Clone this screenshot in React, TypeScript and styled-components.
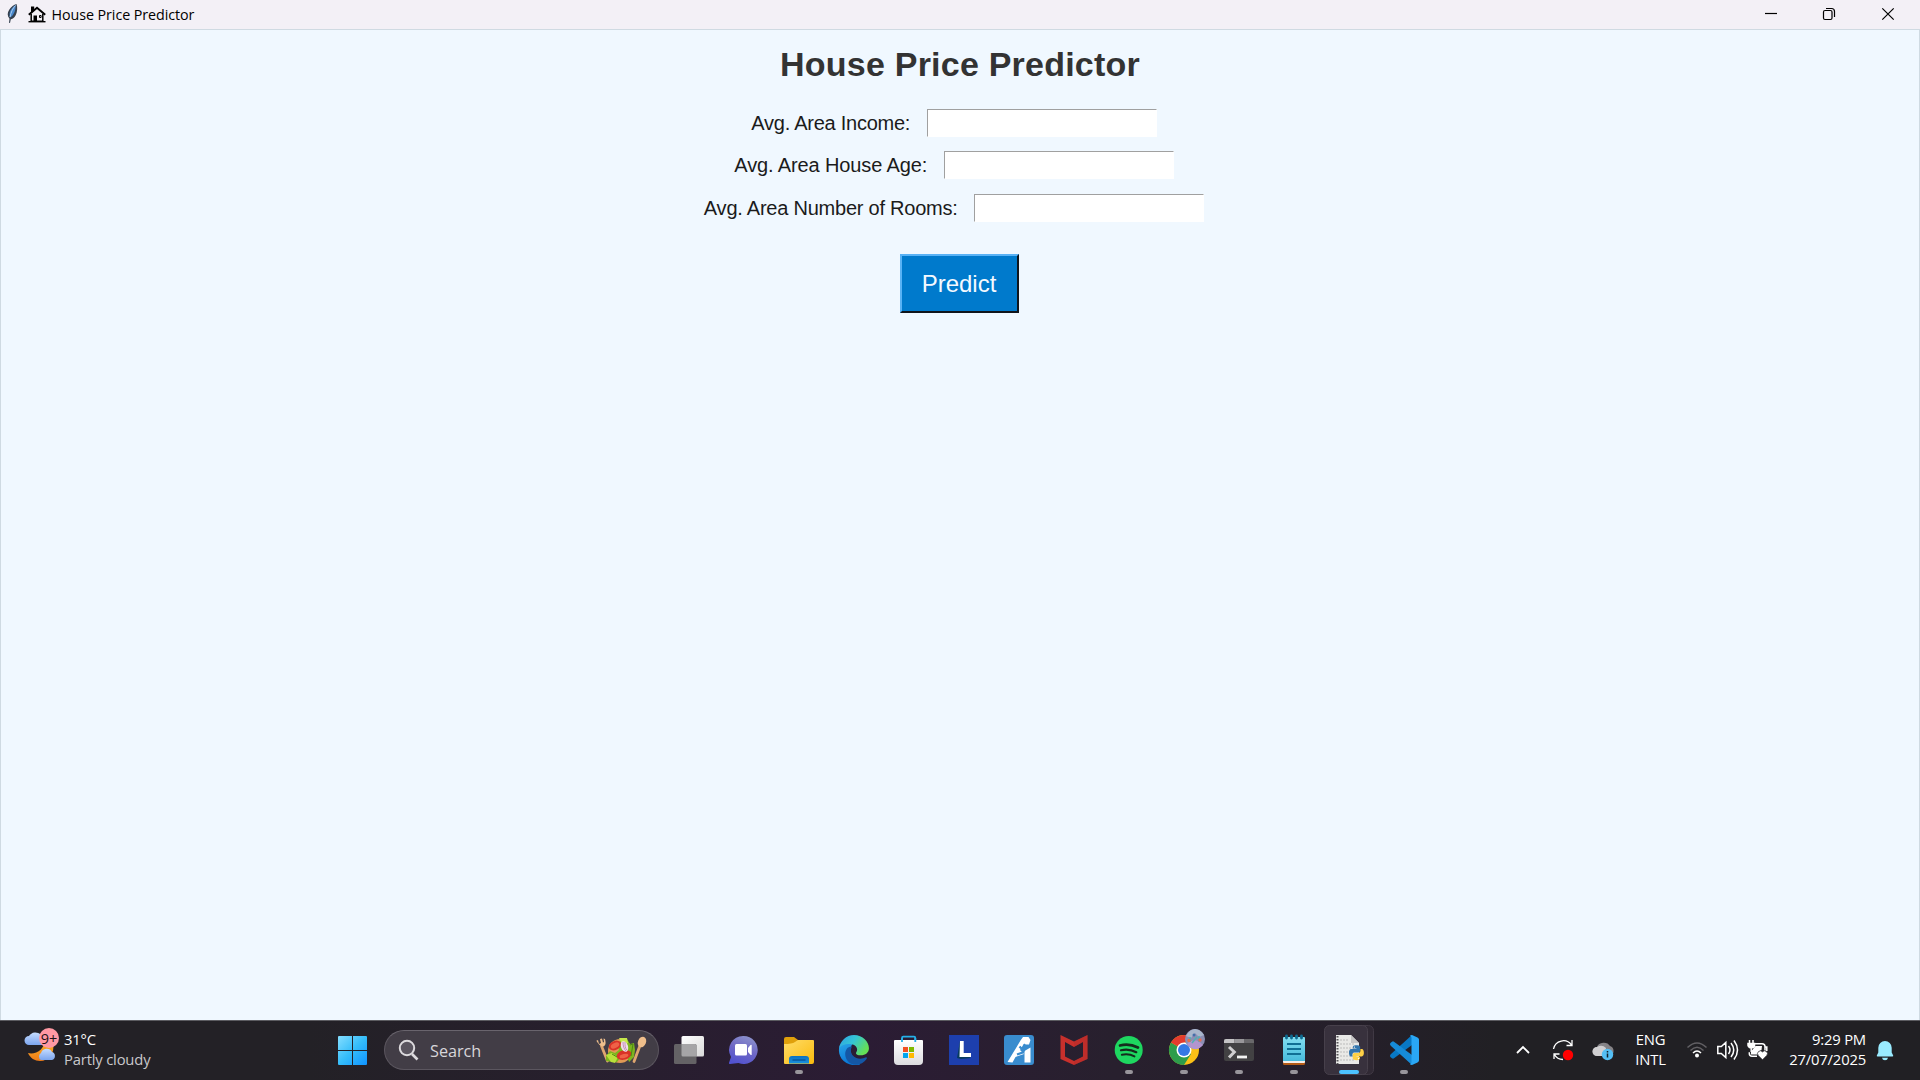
import React from "react";
import styled, { createGlobalStyle } from "styled-components";

const UI = `"Open Sans", "Noto Sans", sans-serif`;
const ARIAL = `"Liberation Sans", Arial, sans-serif`;

const Global = createGlobalStyle`
  * { box-sizing: border-box; }
  body { margin: 0; overflow: hidden; }
  svg { display: block; flex: none; overflow: visible; }
`;

const Screen = styled.div`
  width: 1920px;
  height: 1080px;
  display: flex;
  flex-direction: column;
  background: #f0f8ff;
`;

const TitleBar = styled.header`
  height: 29px;
  flex: none;
  display: flex;
  align-items: flex-start;
  background: #f3f0f6;
`;

const WindowTitle = styled.span`
  font: 400 14.3px/29px ${UI};
  letter-spacing: -0.07px;
  color: #000;
  margin-left: 5.500px;
  white-space: nowrap;
`;

const Controls = styled.div`
  display: flex;
  margin-left: auto;
`;

const Client = styled.main`
  flex: 1;
  border: 1px solid #cfdae2;
  border-bottom: 0;
  display: flex;
  flex-direction: column;
  align-items: center;
`;

const Heading = styled.h1`
  margin: 13px 0 0;
  font: 700 34px/42px ${ARIAL};
  letter-spacing: 0.22px;
  color: #333;
  white-space: nowrap;
`;

const Form = styled.form`
  display: flex;
  flex-direction: column;
  align-items: center;
  gap: 14.5px;
  margin-top: 23.6px;
`;

const Row = styled.div`
  display: flex;
  align-items: center;
  height: 28px;
  padding-right: 12px;
`;

const Label = styled.label<{ $spacing: number }>`
  font: 400 20px/28px ${ARIAL};
  letter-spacing: ${(p) => p.$spacing}px;
  color: #1b1b1b;
  margin-right: 16.5px;
  white-space: nowrap;
`;

const Entry = styled.input`
  width: 230px;
  height: 28px;
  padding: 0 4px;
  font: 400 18px ${ARIAL};
  background: #fff;
  outline: 0;
  border: 1px solid #fff;
  border-top: 1px solid #a0a0a0;
  border-left: 1px solid #a0a0a0;
`;

const PredictButton = styled.button`
  margin: 18px 2px 0 0;
  width: 119px;
  height: 59px;
  padding: 0;
  background: #007acc;
  color: #f4f9ff;
  font: 400 24px/50px ${ARIAL};
  border: 2px solid #10151b;
  border-top-color: #59b2f5;
  border-left-color: #59b2f5;
`;

const Taskbar = styled.footer`
  height: 60px;
  flex: none;
  display: flex;
  align-items: stretch;
  box-shadow: inset 0 1px #5c5c61;
  background: linear-gradient(90deg, #232126 0, #232126 16%, #271f2d 30%, #2b1c34 45%, #28202e 58%, #251f2a 70%, #212024 78%, #212024 100%);
`;

const Weather = styled.div`
  width: 325px;
  display: flex;
`;

const TextPair = styled.div<{ $align: string; $width: number }>`
  width: ${(p) => p.$width}px;
  display: flex;
  flex-direction: column;
  justify-content: center;
  padding-bottom: 2px;
  text-align: ${(p) => p.$align};
  font: 400 14.8px/20px ${UI};
  letter-spacing: -0.18px;
  color: #fff;
  white-space: nowrap;
`;

const Muted = styled.span`
  color: #c9c8cb;
`;

const SearchBox = styled.div`
  width: 275px;
  height: 40px;
  margin: 10px 2px 0 4px;
  border: 1px solid #5b565f;
  border-top-color: #69646d;
  border-radius: 20px;
  background: #423d46;
  display: flex;
  align-items: center;
`;

const SearchText = styled.span`
  font: 400 16.2px/38px ${UI};
  color: #d8d6da;
  margin-left: 11px;
  padding-top: 1px;
  flex: 1;
`;

const Tray = styled.div`
  display: flex;
  margin-left: auto;
`;

const Slot = ({ children }: { children: React.ReactNode }) => (
  <svg width="55" height="60" viewBox="0 0 55 60">{children}</svg>
);

const Dot = () => <rect x="24" y="50" width="8" height="4" rx="2" fill="#98959b" />;

const WeatherIcon = () => (
  <svg width="64" height="60" viewBox="0 0 64 60">
    <defs>
      <linearGradient id="cloud" x2="0" y2="1"><stop stopColor="#c5dcff" /><stop offset="1" stopColor="#7ba5ee" /></linearGradient>
      <linearGradient id="moon" x2="0" y2="1"><stop stopColor="#ffc02e" /><stop offset="1" stopColor="#ee7b18" /></linearGradient>
    </defs>
    <path d="M45 17c3 0 7 3 8 7 2 9-4 17-13 17-5 0-10-3-12-8 7 2 18-3 17-16Z" fill="url(#moon)" />
    <path d="M29 25a4 4 0 0 1 0-9 7 6 0 0 1 12-1 5 5 0 0 1 2 10Z" fill="url(#cloud)" />
    <path d="M41 40a4 4 0 0 1 0-7 6 6 0 0 1 11-1 4.200 4.200 0 0 1 0 8Z" fill="url(#cloud)" />
    <circle cx="49" cy="18" r="10" fill="#ff99a4" />
    <text x="49" y="23.500" textAnchor="middle" fontFamily={UI} fontSize="14.500" fill="#1c1216">9+</text>
  </svg>
);

const Feather = () => (
  <svg width="28" height="29" viewBox="0 0 28 29">
    <path d="M16.500 4c1.200 3 .8 8-.7 11-1.400 3-3.700 4-5 4.200L10 23l-1-.3.500-4c-2.500-3-2.200-6-.3-9C11 7 14 4.300 16.500 4Z" fill="#35404e" />
    <path d="M15.700 5c-3 1.800-5.500 4.600-6 8-.1 2 0 3.500.5 4.500 2.500-1.500 5.500-5.500 5.500-12.500Z" fill="#4787cc" />
    <path d="M15.500 5.500c-3 3-4.500 7-5.500 11.500" stroke="#a9cdf0" fill="none" />
  </svg>
);

const House = () => (
  <svg width="18" height="29" viewBox="28 0 18 29">
    <g fill="none" stroke="#000">
      <path d="m28.800 14.800 8.200-7 8.200 7" strokeWidth="2" />
      <path d="M31.200 14v7.300h11.600V14" strokeWidth="1.500" />
      <path d="M28.500 21.700h17" strokeWidth="1.400" />
      <path d="M39.500 15.500h1.600v2h-1.600Z" />
    </g>
    <path d="M31 6.500h3.200v4L31 13ZM33.500 15.500h3.500v6h-3.500Z" fill="#000" />
  </svg>
);

const ControlIcons = () => (
  <svg width="190" height="29" viewBox="1730 0 190 29" fill="none" stroke="#000" strokeWidth="1.200">
    <path d="M1765 13.500h12" />
    <rect x="1823.500" y="10.500" width="8.500" height="9" rx="1.500" />
    <path d="M1826 8.500h5.500q3 0 3 3V17" />
    <path d="m1882.300 8.300 11.400 11.400m0-11.400-11.400 11.400" />
  </svg>
);

const StartIcon = () => (
  <svg width="55" height="60" viewBox="325 0 55 60">
    <defs><linearGradient id="win" gradientUnits="userSpaceOnUse" x1="338" y1="16" x2="367" y2="45"><stop stopColor="#85deff" /><stop offset=".5" stopColor="#35bdfa" /><stop offset="1" stopColor="#0f93ff" /></linearGradient></defs>
    <path fill="url(#win)" d="M339 16h13v14h-14V17q0-1 1-1ZM353 16h13q1 0 1 1v13h-14ZM338 31h14v14h-13q-1 0-1-1ZM353 31h14v13q0 1-1 1h-13Z" />
  </svg>
);

const Magnifier = () => (
  <svg width="34" height="38" viewBox="0 0 34 38" fill="none" stroke="#dcdadd">
    <circle cx="22" cy="17" r="7.200" strokeWidth="2" fill="#5a555f" />
    <path d="m27 23 5.500 5.500" strokeWidth="2.600" />
  </svg>
);

const Salad = () => (
  <svg width="68" height="38" viewBox="591 11 68 38">
    <g stroke="#dfa66f" strokeWidth="2.800" strokeLinecap="round" fill="none">
      <path d="m602.500 26 6 15" />
      <path d="m642 23-7 18.500" />
    </g>
    <path d="M597 21l2-1 1 4 2-1-1-4 2-.5 1 4 1-.4-.5-3.600 1.500.5c1 4 1 6-1.500 7.500-3 0-5-2-7-5.500Z" fill="#efbf8c" />
    <ellipse cx="643" cy="22" rx="4" ry="5.500" fill="#efbe8b" transform="rotate(22 643 22)" />
    <circle cx="621" cy="31" r="12" fill="#e09a55" />
    <path d="m607 36 4-5 5 2 4-3-1-5 3-6 6 0 3 5 4-1 1 7-1 7-5 5-2-6-6 1-4 5-5 0-6-1Z" fill="#7db51e" />
    <path d="m607 35 6-2 6 4-3 6-4-1Z" fill="#b9e03b" />
    <path d="m620 18 8 0 1 5-5 3Z" fill="#c5e84b" />
    <ellipse cx="616" cy="25.500" rx="6.500" ry="4.500" fill="#d93227" transform="rotate(-25 616 25.500)" />
    <ellipse cx="625" cy="35" rx="7.500" ry="4.700" fill="#d93227" transform="rotate(-15 625 35)" />
    <ellipse cx="616" cy="25.500" rx="4.500" ry="2.500" fill="#ef6247" transform="rotate(-25 616 25.500)" />
    <ellipse cx="625" cy="36" rx="4.500" ry="2" fill="#ef6247" transform="rotate(-15 625 36)" />
    <ellipse cx="625.500" cy="26.500" rx="3.500" ry="5.500" fill="#f1dcea" transform="rotate(-20 625.500 26.500)" />
    <path d="M624 22c0 4 1 7 3 9m-1-9c0 4 0 6 2 8" stroke="#b47ca8" fill="none" strokeWidth=".8" />
    <path d="m613 34 5 3m13-12 3-1-2 12" stroke="#4c8a12" fill="none" />
  </svg>
);

const TaskView = () => (
  <Slot>
    <defs><linearGradient id="tv" x2="1" y2="1"><stop stopColor="#fff" /><stop offset="1" stopColor="#dadada" /></linearGradient></defs>
    <rect x="20.500" y="16" width="22.500" height="20.500" rx="1.500" fill="url(#tv)" />
    <rect x="13" y="24" width="22.500" height="20" rx="1.500" fill="#646265" />
    <path d="M20.500 24H34q1.500 0 1.500 1.500v11H22q-1.500 0-1.500-1.500Z" fill="#a6a5a7" />
  </Slot>
);

const Chat = () => (
  <Slot>
    <defs><linearGradient id="chat" x1=".7" x2=".3" y2="1"><stop stopColor="#8c92cc" /><stop offset=".5" stopColor="#6e67c5" /><stop offset="1" stopColor="#5152d0" /></linearGradient></defs>
    <path d="M27.500 16a14 14 0 1 1-5 27l-8.500 1q-1.500 0-1-1.300l2-5.700A14 14 0 0 1 27.500 16Z" fill="url(#chat)" />
    <rect x="19" y="24" width="12" height="11.500" rx="1.500" fill="#fff" />
    <path d="m32 28 2.500-3q1.200-.8 1.200.5v9q0 1-1.200.2L32 32Z" fill="#fff" />
  </Slot>
);

const Explorer = () => (
  <Slot>
    <defs>
      <linearGradient id="fold" x2="1" y2="1"><stop stopColor="#ffdc68" /><stop offset="1" stopColor="#fabb0d" /></linearGradient>
      <linearGradient id="foldb" x2="0" y2="1"><stop stopColor="#0c72c0" /><stop offset="1" stopColor="#1a91df" /></linearGradient>
    </defs>
    <path d="M13 31V19q0-2 2-2h8l4 3v7Z" fill="#e0a00b" />
    <path d="M13 24q8 0 11-2l3-2h15q1 0 1 1v21q0 2-2 2H14q-1 0-1-1Z" fill="url(#fold)" />
    <path d="M18 43.500V39q0-3 3-3h14q3 0 3 3v4.500Z" fill="url(#foldb)" />
    <path d="M21.500 40h13" stroke="#07559c" strokeWidth="1.400" />
    <Dot />
  </Slot>
);

const Edge = () => (
  <Slot>
    <defs>
      <linearGradient id="e1" x1="0" x2="1" y2=".5"><stop stopColor="#2f9fe5" /><stop offset=".5" stopColor="#34c5d5" /><stop offset="1" stopColor="#65df56" /></linearGradient>
      <linearGradient id="e2" x2=".4" y2="1"><stop stopColor="#2ba8e9" /><stop offset="1" stopColor="#0875d6" /></linearGradient>
    </defs>
    <g transform="translate(13 15) scale(.117)">
      <path fill="url(#e2)" d="M180 252c-20 7-95 13-140-30C-15 172-6 88 20 70c25-18 76-18 98 5-20 20-32 68 0 111 20 28 45 50 62 66Z" />
      <path fill="#1457a5" d="M231 190c-37 19-83 16-111-13-21-22-25-57-7-79-35-6-60 27-60 65 0 49 35 88 87 92 40 1 75-20 97-52 3-5 1-16-6-13Z" />
      <path fill="url(#e1)" d="M2 117C8 50 62 0 128 0c76 0 128 58 128 113 0 36-30 61-70 61-27 0-41-9-41-18 0-8 10-14 10-32 0-24-24-48-62-48C44 76 7 93 2 117Z" />
    </g>
  </Slot>
);

const Store = () => (
  <Slot>
    <defs><linearGradient id="st" x2="0" y2="1"><stop stopColor="#fff" /><stop offset="1" stopColor="#dcdcdf" /></linearGradient></defs>
    <path d="M21 22v-4q0-1.300 1.300-1.300H33q1.300 0 1.300 1.300v4" fill="none" stroke="#25b0e8" strokeWidth="1.800" />
    <path d="M13 21q0-1 1-1h27q1 0 1 1v20q0 4-4 4H17q-4 0-4-4Z" fill="url(#st)" />
    <path d="M21 18v4m13.300-4v4" stroke="#25b0e8" strokeWidth="1.800" />
    <path d="M22 27h5v5h-5Z" fill="#f25022" /><path d="M28 27h5v5h-5Z" fill="#7fba00" />
    <path d="M22 33h5v5h-5Z" fill="#00a4ef" /><path d="M28 33h5v5h-5Z" fill="#ffb900" />
  </Slot>
);

const LApp = () => (
  <Slot>
    <rect x="13" y="15" width="30" height="30" fill="#1d3fad" />
    <path d="m24 21-3 17 4 1 10-1-8-5Z" fill="#073b5e" />
    <path d="M24 21h3.700v12H35v4H23.500Z" fill="#fff" />
  </Slot>
);

const AiApp = () => (
  <Slot>
    <rect x="13" y="15" width="30" height="30" rx="3" fill="#398cce" />
    <path d="m16.500 42 13-21.500 2.500-3.500h5.500l2 3-1.500 4.500h-5.500L29 30l4 4-8.500 3-3 5.500Z" fill="#fff" />
    <path d="m33.500 31 6-3.500v15h-6v-5Z" fill="#fff" />
    <path d="m28.500 26.500 2 2m2-4 2.500 2-3.500 6-5.500 2" fill="none" stroke="#398cce" strokeWidth="2.300" />
  </Slot>
);

const McAfee = () => (
  <Slot>
    <path fillRule="evenodd" fill="#c8302c" d="m14.500 15 13.500 6.500L41.500 15v24L28 45l-13.500-6Zm4.500 7v14.500l9 4.500 9-4.500V22l-9 5Z" />
    <path d="M28 21.500 41.500 15v24L28 45v-4l9-4.500V22l-9 5Z" fill="#a82827" opacity=".3" />
  </Slot>
);

const Spotify = () => (
  <Slot>
    <circle cx="27.700" cy="30" r="14" fill="#1ed760" />
    <g fill="none" stroke="#152c1d" strokeLinecap="round">
      <path d="M19 25.500q9-2.500 18 2" strokeWidth="2.700" />
      <path d="M20 30.200q8-2 15.300 2" strokeWidth="2.200" />
      <path d="M20.800 34.700q7-1.500 12.700 1.700" strokeWidth="1.900" />
    </g>
    <Dot />
  </Slot>
);

const Chrome = () => (
  <Slot>
    <circle cx="28" cy="30" r="15" fill="#fbc116" />
    <path d="M28 30 15 22.500A15 15 0 0 0 28 45l7-11Z" fill="#2d9d4b" />
    <path d="M28 30 15 22.500A15 15 0 0 1 41 22.500H28Z" fill="#e33b2e" />
    <circle cx="28" cy="30" r="7.500" fill="#fff" /><circle cx="28" cy="30" r="6" fill="#3478e5" />
    <circle cx="39" cy="19" r="10" fill="#8c8fb4" />
    <path d="M30 16q4-7 9-7t9 6l-5 2-4-4-4 5Z" fill="#a9b6cc" />
    <path d="M31 24q8-8 16 1-8 9-16-1Z" fill="#b295cf" />
    <path d="M34 17v5m9-6v6m-7 1 5-6" stroke="#4fb1b4" strokeWidth="1.500" />
    <circle cx="33" cy="20.500" r="1.700" fill="#e4714c" /><circle cx="44" cy="20" r="1.700" fill="#e56f59" /><circle cx="38" cy="15" r="1.500" fill="#446eaa" />
    <Dot />
  </Slot>
);

const Terminal = () => (
  <Slot>
    <path d="M13 19h30v20q0 2-2 2H15q-2 0-2-2Z" fill="#424143" />
    <path d="M13 23v-2q0-2 2-2h8.500v4Z" fill="#c4c3c5" /><path d="M23.500 19H33v4h-9.500Z" fill="#98979a" /><path d="M33 19h8q2 0 2 2v2H33Z" fill="#69686b" />
    <path d="m18 27 5.300 5-5.300 5.500" fill="none" stroke="#d0cfd1" strokeWidth="3" />
    <path d="M26 37h10" stroke="#f3f3f3" strokeWidth="2.800" />
    <Dot />
  </Slot>
);

const Notepad = () => (
  <Slot>
    <defs><linearGradient id="np" x2="0" y2="1"><stop stopColor="#82def0" /><stop offset="1" stopColor="#47bbdb" /></linearGradient></defs>
    <rect x="17" y="35" width="22" height="10" rx="1.500" fill="#b45b15" />
    <rect x="17" y="34" width="22" height="9" rx="1" fill="#f5eee8" />
    <path d="M17 18q0-1 1-1h20q1 0 1 1v23H17Z" fill="url(#np)" />
    <path d="M20.500 16v2m5-2v2m5-2v2m5-2v2" stroke="#0e6c91" strokeWidth="2.800" strokeLinecap="round" />
    <path d="M21 24h14m-14 5h14m-14 5h14" stroke="#106f94" strokeWidth="2" />
    <Dot />
  </Slot>
);

const PythonApp = () => (
  <Slot>
    <rect x="12" y="5.500" width="40.500" height="49" rx="5" fill="#302934" stroke="#403944" />
    <rect x="3.500" y="5.500" width="43" height="49" rx="5" fill="#38313d" stroke="#47404b" />
    <path d="M15 15h15l8 8v21H15Z" fill="#e9e9e7" /><path d="M30 15v8h8Z" fill="#c6c5c5" />
    <path d="M19 20h9m-9 4h15m-15 4h15m-15 4h15m-15 4h14m-14 4h14" stroke="#bbb" strokeDasharray="2 1" />
    <path d="M16.500 16v28" stroke="#575559" strokeWidth="2" strokeDasharray="1.500 1.500" />
    <g transform="translate(28 25.300) scale(.62)">
      <path fill="#3375ad" d="M11.900 0C6 0 6.300 2.600 6.300 2.600v2.700H12v.8H4S0 5.600 0 12c0 6.300 3.500 6 3.500 6h2.100v-2.900s-.1-3.500 3.400-3.500h5.700s3.300.1 3.300-3.200V3.100S18.500 0 11.900 0Z" />
      <path fill="#ffd146" d="M12.100 24c5.900 0 5.600-2.600 5.600-2.600v-2.700H12v-.8h8s4 .5 4-5.900c0-6.300-3.500-6-3.500-6h-2.100v2.900s.1 3.500-3.400 3.500H9.300S6 12.300 6 15.600v5.300S5.500 24 12.100 24Z" />
      <circle cx="8.700" cy="2.800" r="1" fill="#fff" /><circle cx="15.300" cy="21.200" r="1" fill="#fff" />
    </g>
    <rect x="18" y="50" width="20" height="4" rx="2" fill="#4cc2ff" />
  </Slot>
);

const VsCode = () => (
  <Slot>
    <path d="m36 15-21 19q-2 2 0 3.500l1 .8q1 .7 2 0L36 25Z" fill="#0878c5" />
    <path d="m36 45-21-19q-2-2 0-3.500l1-.8q1-.7 2 0L36 35Z" fill="#168bd8" />
    <path d="m34 15.500 2-.5 5.500 2.500q1.500.8 1.500 2v21q0 1.200-1.500 2L36 45l-2-.5 1.500-2v-25Z" fill="#2aa7f5" />
    <Dot />
  </Slot>
);

const TrayIcons = () => (
  <svg width="126" height="60" viewBox="1500 0 126 60" fill="none" stroke="#fff">
    <path d="m1517 33 6-6 6 6" strokeWidth="1.800" />
    <path d="M1553.500 29a10 10 0 0 1 18-4m.5-5v5.500h-5.500M1563 39.500c-4 0-7-2-8.500-5m-.5 4.500v-5h5.500" strokeWidth="1.300" />
    <circle cx="1568" cy="35" r="5.200" fill="#f00" stroke="none" />
    <path d="M1597 36a4.500 4.500 0 0 1 0-9 7 6 0 0 1 13-1 5.300 5.300 0 0 1 0 10Z" fill="#858387" stroke="none" />
    <path d="M1597 36a4.500 4.500 0 0 1 0-9q5-3 9 1l-1 8Z" fill="#d0cfd1" stroke="none" />
    <circle cx="1607.500" cy="34.500" r="5.700" fill="#54bff5" stroke="none" />
    <path d="M1607.500 33.500v4m0-6.500v1.500" stroke="#12222c" strokeWidth="1.500" />
  </svg>
);

const StatusIcons = () => (
  <svg width="100" height="60" viewBox="1676 0 100 60" fill="none" stroke="#fff" strokeWidth="1.500">
    <path d="M1688.500 27.500q9.500-9 19 0M1691.500 30.500q6.500-6.500 13 0" stroke="#626064" />
    <path d="M1694 33q4-4 8 0" />
    <circle cx="1698" cy="35.500" r="2" fill="#fff" stroke="none" />
    <path d="M1718.800 26.500h3.500l4.500-4v15l-4.500-4h-3.500ZM1729.500 26q3 4 0 8m2.500-11q5.500 7 0 14m3-16.500q7 9.500 0 19" />
    <path d="M1756 23.700h7q3 0 3 3v4M1766 27h1.800v4M1758 36.300h-5q-2.700 0-2.700-3v-1" />
    <path d="M1756.500 26h6.500l-.5 4-3 2v2.500h-7.500v-3Z" fill="#fff" stroke="none" />
    <path d="M1750.500 20v3m3.500-3v3m-5 .5h6.500v2q0 2-3 2.500-3-.5-3.500-2.500Zm3.200 4.500v4" fill="#fff" />
    <path d="m1763.500 39.800-4.300-4.400a2.700 2.700 0 0 1 4.300-3.500 2.700 2.700 0 0 1 4.300 3.500Z" fill="#fff" stroke="#212024" strokeWidth=".7" />
  </svg>
);

const Bell = () => (
  <svg width="54" height="60" viewBox="1866 0 54 60">
    <path d="M1885 21a6.700 6.700 0 0 1 6.700 6.700v4.800l1.500 3q.2 1-.8 1h-14.800q-1 0-.8-1l1.500-3v-4.800A6.700 6.700 0 0 1 1885 21Zm-3 16.700h6q-.5 2.500-3 2.500t-3-2.500Z" fill="#99ebff" />
  </svg>
);

const fields = [
  { id: "income", text: "Avg. Area Income:", spacing: -0.25 },
  { id: "age", text: "Avg. Area House Age:", spacing: -0.12 },
  { id: "rooms", text: "Avg. Area Number of Rooms:", spacing: -0.23 },
];

export default function App() {
  return (
    <Screen>
      <Global />
      <TitleBar>
        <Feather />
        <House />
        <WindowTitle>House Price Predictor</WindowTitle>
        <Controls><ControlIcons /></Controls>
      </TitleBar>
      <Client>
        <Heading>House Price Predictor</Heading>
        <Form onSubmit={(e) => e.preventDefault()}>
          {fields.map((f) => (
            <Row key={f.id}>
              <Label htmlFor={f.id} $spacing={f.spacing}>{f.text}</Label>
              <Entry id={f.id} />
            </Row>
          ))}
          <PredictButton>Predict</PredictButton>
        </Form>
      </Client>
      <Taskbar>
        <Weather>
          <WeatherIcon />
          <TextPair $align="left" $width={120}>
            <span>31°C</span>
            <Muted>Partly cloudy</Muted>
          </TextPair>
        </Weather>
        <StartIcon />
        <SearchBox>
          <Magnifier />
          <SearchText>Search</SearchText>
          <Salad />
        </SearchBox>
        <TaskView />
        <Chat />
        <Explorer />
        <Edge />
        <Store />
        <LApp />
        <AiApp />
        <McAfee />
        <Spotify />
        <Chrome />
        <Terminal />
        <Notepad />
        <PythonApp />
        <VsCode />
        <Tray>
          <TrayIcons />
          <TextPair $align="center" $width={49}>
            <span>ENG</span>
            <span>INTL</span>
          </TextPair>
          <StatusIcons />
          <TextPair $align="right" $width={91}>
            <span>9:29 PM</span>
            <span>27/07/2025</span>
          </TextPair>
          <Bell />
        </Tray>
      </Taskbar>
    </Screen>
  );
}
